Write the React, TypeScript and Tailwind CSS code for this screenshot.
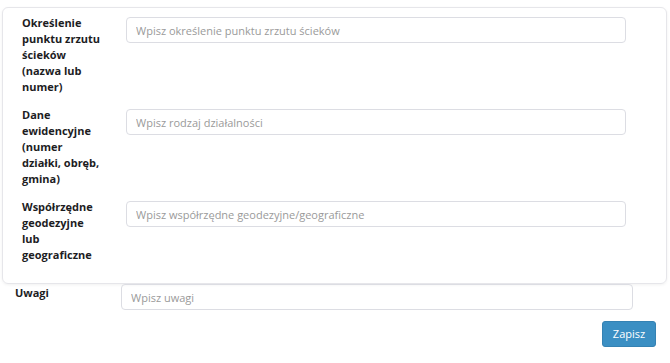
import React from "react";

const rows = [
  { label: ["Określenie", "punktu zrzutu", "ścieków", "(nazwa lub", "numer)"], ph: "Wpisz określenie punktu zrzutu ścieków" },
  { label: ["Dane", "ewidencyjne", "(numer", "działki, obręb,", "gmina)"], ph: "Wpisz rodzaj działalności" },
  { label: ["Współrzędne", "geodezyjne", "lub", "geograficzne"], ph: "Wpisz współrzędne geodezyjne/geograficzne" },
];

export default function App() {
  return (
    <div className="w-[670px] h-[363px] bg-white overflow-hidden" style={{ fontFamily: '"Open Sans", "Noto Sans", sans-serif' }}>
      <div className="pt-[7px] pl-[2px] pr-[3px]">
        <div className="rounded-[6px] border border-[#e6e6ea] shadow-[0_1px_3px_rgba(0,0,0,0.06)] pt-[7px] pb-[8px] pl-[19px]">
          {rows.map((r) => (
            <div key={r.ph} className="flex items-start mb-[12px]">
              <div className="w-[84px] text-[11px] leading-[16px] font-bold text-[#1d1d1f]">
                {r.label.map((l, i) => (
                  <React.Fragment key={i}>
                    {l}
                    {i < r.label.length - 1 && <br />}
                  </React.Fragment>
                ))}
              </div>
              <input
                className="ml-[20px] mt-[2px] w-[500px] h-[26px] rounded-[4px] border border-[#dcdde3] px-[9px] text-[11px] outline-none placeholder:text-[#9a9a9a]"
                placeholder={r.ph}
              />
            </div>
          ))}
        </div>
      </div>
      <div className="flex items-start pl-[15px]">
        <div className="w-[106px] pt-[1px] text-[11px] leading-[16px] font-bold text-[#1d1d1f]">Uwagi</div>
        <input
          className="w-[512px] h-[26px] rounded-[4px] border border-[#dcdde3] px-[9px] text-[11px] outline-none placeholder:text-[#9a9a9a]"
          placeholder="Wpisz uwagi"
        />
      </div>
      <div className="flex justify-end pr-[14px] pt-[11px]">
        <button className="w-[54px] h-[26px] rounded-[3px] bg-[#3b8fc3] text-white text-[11px] border border-[#3582b3]">Zapisz</button>
      </div>
    </div>
  );
}
